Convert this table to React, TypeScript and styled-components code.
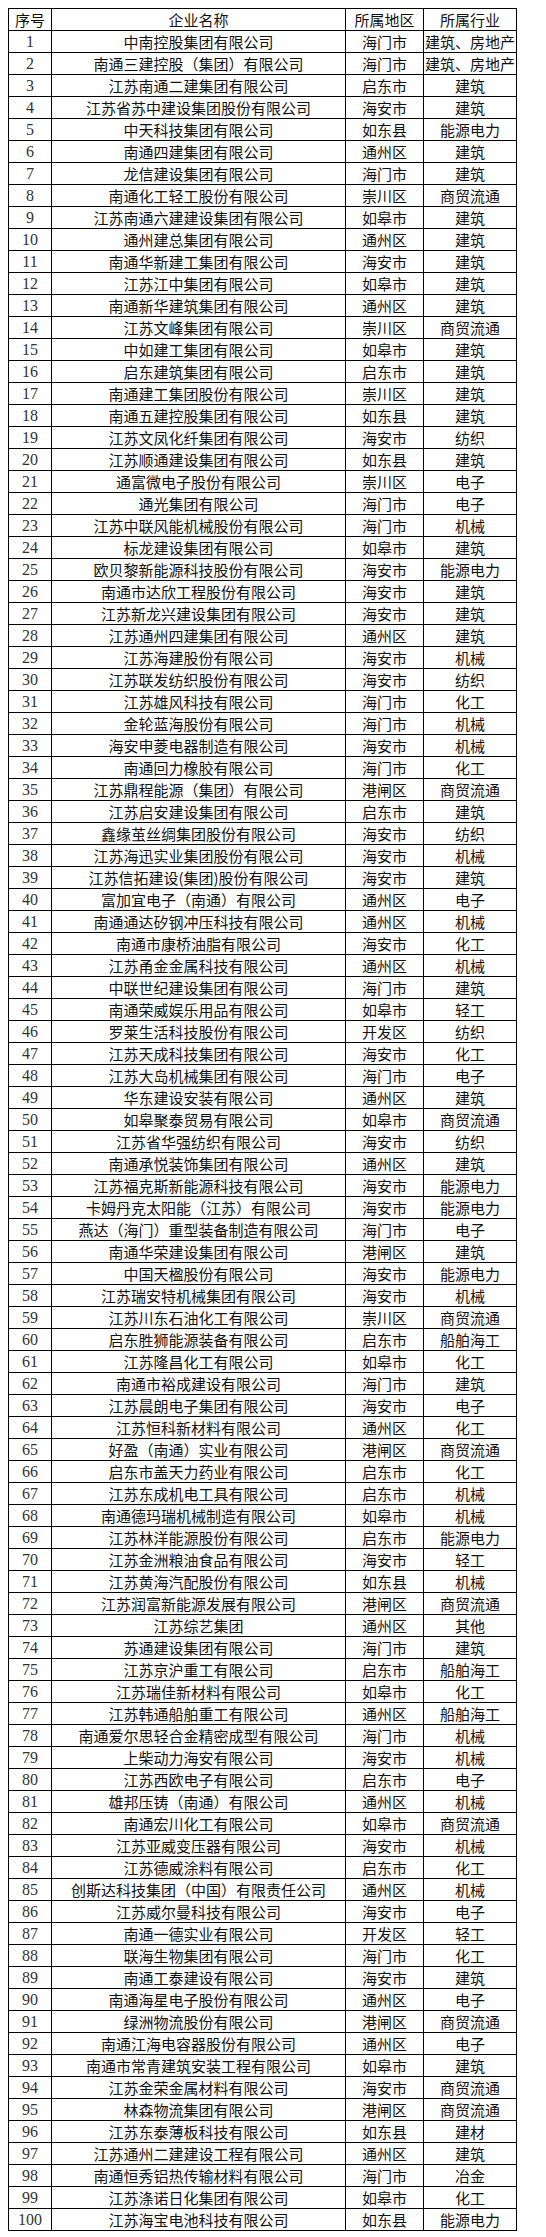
import React from "react";
import styled, { createGlobalStyle } from "styled-components";

const GlobalStyle = createGlobalStyle`
  body {
    margin: 0;
    background: #ffffff;
  }
`;

const Page = styled.div`
  padding: 8px 0 0 8px;
`;

const Table = styled.table`
  border-collapse: collapse;
  table-layout: fixed;
  width: 505px;
  font-family: "Noto Sans CJK SC", "Liberation Sans", sans-serif;
  font-size: 15px;
  color: #111;
`;

const Cell = styled.td<{ $w?: number; $num?: boolean }>`
  border: 1px solid #000;
  padding: 0;
  height: 21px;
  line-height: 21px;
  text-align: center;
  white-space: nowrap;
  overflow: hidden;
  ${(p) => (p.$w ? `width: ${p.$w}px;` : "")}
  ${(p) =>
    p.$num
      ? `font-family: "Liberation Serif", serif; font-size: 16px; color: #333;`
      : ""}
`;

const HeadCell = styled(Cell).attrs({ as: "th" })`
  font-weight: normal;
`;

const rows = `中南控股集团有限公司|海门市|建筑、房地产
南通三建控股（集团）有限公司|海门市|建筑、房地产
江苏南通二建集团有限公司|启东市|建筑
江苏省苏中建设集团股份有限公司|海安市|建筑
中天科技集团有限公司|如东县|能源电力
南通四建集团有限公司|通州区|建筑
龙信建设集团有限公司|海门市|建筑
南通化工轻工股份有限公司|崇川区|商贸流通
江苏南通六建建设集团有限公司|如皋市|建筑
通州建总集团有限公司|通州区|建筑
南通华新建工集团有限公司|海安市|建筑
江苏江中集团有限公司|如皋市|建筑
南通新华建筑集团有限公司|通州区|建筑
江苏文峰集团有限公司|崇川区|商贸流通
中如建工集团有限公司|如皋市|建筑
启东建筑集团有限公司|启东市|建筑
南通建工集团股份有限公司|崇川区|建筑
南通五建控股集团有限公司|如东县|建筑
江苏文凤化纤集团有限公司|海安市|纺织
江苏顺通建设集团有限公司|如东县|建筑
通富微电子股份有限公司|崇川区|电子
通光集团有限公司|海门市|电子
江苏中联风能机械股份有限公司|海门市|机械
标龙建设集团有限公司|如皋市|建筑
欧贝黎新能源科技股份有限公司|海安市|能源电力
南通市达欣工程股份有限公司|海安市|建筑
江苏新龙兴建设集团有限公司|海安市|建筑
江苏通州四建集团有限公司|通州区|建筑
江苏海建股份有限公司|海安市|机械
江苏联发纺织股份有限公司|海安市|纺织
江苏雄风科技有限公司|海门市|化工
金轮蓝海股份有限公司|海门市|机械
海安申菱电器制造有限公司|海安市|机械
南通回力橡胶有限公司|海门市|化工
江苏鼎程能源（集团）有限公司|港闸区|商贸流通
江苏启安建设集团有限公司|启东市|建筑
鑫缘茧丝绸集团股份有限公司|海安市|纺织
江苏海迅实业集团股份有限公司|海安市|机械
江苏信拓建设(集团)股份有限公司|海安市|建筑
富加宜电子（南通）有限公司|通州区|电子
南通通达矽钢冲压科技有限公司|通州区|机械
南通市康桥油脂有限公司|海安市|化工
江苏甬金金属科技有限公司|通州区|机械
中联世纪建设集团有限公司|海门市|建筑
南通荣威娱乐用品有限公司|如皋市|轻工
罗莱生活科技股份有限公司|开发区|纺织
江苏天成科技集团有限公司|海安市|化工
江苏大岛机械集团有限公司|海门市|电子
华东建设安装有限公司|通州区|建筑
如皋聚泰贸易有限公司|如皋市|商贸流通
江苏省华强纺织有限公司|海安市|纺织
南通承悦装饰集团有限公司|通州区|建筑
江苏福克斯新能源科技有限公司|海安市|能源电力
卡姆丹克太阳能（江苏）有限公司|海安市|能源电力
燕达（海门）重型装备制造有限公司|海门市|电子
南通华荣建设集团有限公司|港闸区|建筑
中国天楹股份有限公司|海安市|能源电力
江苏瑞安特机械集团有限公司|海安市|机械
江苏川东石油化工有限公司|崇川区|商贸流通
启东胜狮能源装备有限公司|启东市|船舶海工
江苏隆昌化工有限公司|如皋市|化工
南通市裕成建设有限公司|海门市|建筑
江苏晨朗电子集团有限公司|海安市|电子
江苏恒科新材料有限公司|通州区|化工
好盈（南通）实业有限公司|港闸区|商贸流通
启东市盖天力药业有限公司|启东市|化工
江苏东成机电工具有限公司|启东市|机械
南通德玛瑞机械制造有限公司|如皋市|机械
江苏林洋能源股份有限公司|启东市|能源电力
江苏金洲粮油食品有限公司|海安市|轻工
江苏黄海汽配股份有限公司|如东县|机械
江苏润富新能源发展有限公司|港闸区|商贸流通
江苏综艺集团|通州区|其他
苏通建设集团有限公司|海门市|建筑
江苏京沪重工有限公司|启东市|船舶海工
江苏瑞佳新材料有限公司|如皋市|化工
江苏韩通船舶重工有限公司|通州区|船舶海工
南通爱尔思轻合金精密成型有限公司|海门市|机械
上柴动力海安有限公司|海安市|机械
江苏西欧电子有限公司|启东市|电子
雄邦压铸（南通）有限公司|通州区|机械
南通宏川化工有限公司|如皋市|商贸流通
江苏亚威变压器有限公司|海安市|机械
江苏德威涂料有限公司|启东市|化工
创斯达科技集团（中国）有限责任公司|通州区|机械
江苏威尔曼科技有限公司|海安市|电子
南通一德实业有限公司|开发区|轻工
联海生物集团有限公司|海门市|化工
南通工泰建设有限公司|海安市|建筑
南通海星电子股份有限公司|通州区|电子
绿洲物流股份有限公司|港闸区|商贸流通
南通江海电容器股份有限公司|通州区|电子
南通市常青建筑安装工程有限公司|如皋市|建筑
江苏金荣金属材料有限公司|海安市|商贸流通
林森物流集团有限公司|港闸区|商贸流通
江苏东泰薄板科技有限公司|如东县|建材
江苏通州二建建设工程有限公司|通州区|建筑
南通恒秀铝热传输材料有限公司|海门市|冶金
江苏涤诺日化集团有限公司|如皋市|化工
江苏海宝电池科技有限公司|如东县|能源电力`
  .split("\n")
  .map((line) => line.split("|"));

export default function App() {
  return (
    <Page>
      <GlobalStyle />
      <Table>
        <thead>
          <tr>
            <HeadCell $w={42}>序号</HeadCell>
            <HeadCell $w={293}>企业名称</HeadCell>
            <HeadCell $w={77}>所属地区</HeadCell>
            <HeadCell $w={92}>所属行业</HeadCell>
          </tr>
        </thead>
        <tbody>
          {rows.map(([name, region, industry], i) => (
            <tr key={i}>
              <Cell $num>{i + 1}</Cell>
              <Cell>{name}</Cell>
              <Cell>{region}</Cell>
              <Cell>{industry}</Cell>
            </tr>
          ))}
        </tbody>
      </Table>
    </Page>
  );
}
